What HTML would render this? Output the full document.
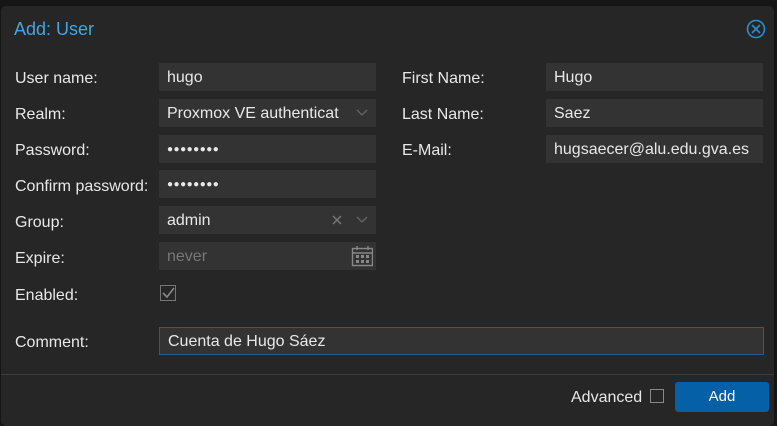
<!DOCTYPE html><html><head><style>
body{margin:0;width:777px;height:421px;background:#151515;font-family:"Liberation Sans",sans-serif;font-size:16px;color:#e8e8e8;overflow:hidden;position:relative}
.win{position:absolute;left:1px;top:6px;width:773px;height:420px;background:#262626;border-radius:5px}
.t{position:absolute;left:13px;top:13px;font-size:18px;color:#3fa6ea}
.l{position:absolute;left:15px}
.f{position:absolute;height:28px;background:#333;line-height:30px;padding-left:8px;box-sizing:border-box}
.L{left:159px;width:217px}.R{left:546px;width:217px}
.rl{position:absolute;left:402px}
.pw{font-size:10px;letter-spacing:0.5px}
</style></head><body>
<div class="win">
<div class="t">Add: User</div>
<svg style="position:absolute;left:745px;top:13px" width="20" height="20" viewBox="0 0 20 20"><circle cx="10" cy="10" r="8.5" fill="none" stroke="#2a8fcf" stroke-width="1.6"/><path d="M6 6L14 14M14 6L6 14" stroke="#2a8fcf" stroke-width="1.6"/></svg>
</div>
<div class="l" style="top:70px">User name:</div><div class="f L" style="top:63px">hugo</div>
<div class="l" style="top:106px">Realm:</div><div class="f L" style="top:99px">Proxmox VE authenticat<svg style="position:absolute;right:8px;top:10px" width="12" height="8"><path d="M1 1L6 6L11 1" stroke="#666" fill="none" stroke-width="1.3"/></svg></div>
<div class="l" style="top:142px">Password:</div><div class="f L pw" style="top:135px">●●●●●●●●</div>
<div class="l" style="top:178px">Confirm password:</div><div class="f L pw" style="top:170px">●●●●●●●●</div>
<div class="l" style="top:214px">Group:</div><div class="f L" style="top:206px">admin<svg style="position:absolute;right:34px;top:9px" width="10" height="10"><path d="M1 1L9 9M9 1L1 9" stroke="#777" stroke-width="1.5"/></svg><svg style="position:absolute;right:8px;top:10px" width="12" height="8"><path d="M1 1L6 6L11 1" stroke="#666" fill="none" stroke-width="1.3"/></svg></div>
<div class="l" style="top:250px">Expire:</div><div class="f L" style="top:242px;color:#777">never<svg style="position:absolute;right:3px;top:3px" width="22" height="22"><rect x="1.5" y="3.5" width="20" height="17" fill="none" stroke="#888" stroke-width="1.4"/><path d="M2 8H21" stroke="#888" stroke-width="1.4"/><path d="M6 1V5M17 1V5" stroke="#888" stroke-width="1.4"/><g fill="#888"><rect x="5" y="10" width="3" height="3"/><rect x="10" y="10" width="3" height="3"/><rect x="15" y="10" width="3" height="3"/><rect x="5" y="15" width="3" height="3"/><rect x="10" y="15" width="3" height="3"/><rect x="15" y="15" width="3" height="3"/></g></svg></div>
<div class="l" style="top:287px">Enabled:</div>
<svg style="position:absolute;left:160px;top:285px" width="17" height="17"><rect x="0.5" y="0.5" width="15" height="15" fill="none" stroke="#777"/><path d="M3 8L7 12L14 3" stroke="#888" fill="none" stroke-width="1.6"/></svg>
<div class="rl" style="top:70px">First Name:</div><div class="f R" style="top:63px">Hugo</div>
<div class="rl" style="top:106px">Last Name:</div><div class="f R" style="top:99px">Saez</div>
<div class="rl" style="top:142px">E-Mail:</div><div class="f R" style="top:135px">hugsaecer@alu.edu.gva.es</div>
<div class="l" style="top:334px">Comment:</div><div class="f" style="top:327px;left:159px;width:605px;border:1px solid #1d5f96;line-height:28px">Cuenta de Hugo Sáez</div>
<div style="position:absolute;left:1px;top:374px;width:773px;height:1px;background:#3c3c3c"></div>
<div style="position:absolute;left:571px;top:389px">Advanced</div>
<div style="position:absolute;left:650px;top:389px;width:14px;height:14px;border:1px solid #888;box-sizing:border-box"></div>
<div style="position:absolute;left:675px;top:382px;width:94px;height:30px;background:#0560a8;border-radius:3px;color:#fff;text-align:center;line-height:30px;font-size:15px">Add</div>
</body></html>
